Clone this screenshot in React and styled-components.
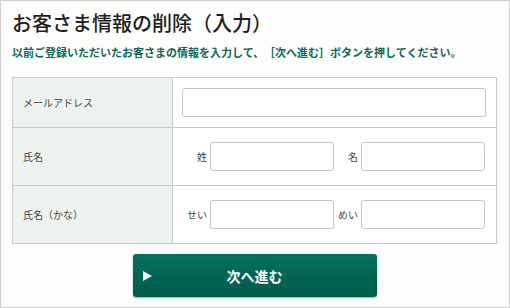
import React from 'react'
import styled, {createGlobalStyle} from 'styled-components'

const GlobalStyle = createGlobalStyle`
  html, body {margin: 0; padding: 0; background: #fdfdfb;}
  body {font-family: "Noto Sans CJK JP", "Noto Sans", sans-serif; text-spacing-trim: space-all;}
`

const Page = styled.div`
  box-sizing: border-box;
  width: 510px;
  height: 308px;
  border: 1px solid #cfcfcf;
  background: #fdfdfb;
  padding: 12px 12px 0 11px;
  display: flex;
  flex-direction: column;
`

const Title = styled.h1`
  margin: 0;
  font-size: 20px;
  line-height: 20px;
  font-weight: 500;
  color: #1e1e1e;
`

const Lead = styled.p`
  margin: 12px 0 0;
  font-size: 11px;
  line-height: 14px;
  font-weight: 700;
  color: #0b6a56;
  white-space: nowrap;
`

const Table = styled.div`
  margin-top: 18px;
  border: 1px solid #c9c9c9;
  display: grid;
  grid-template-columns: 160px 1fr;
`

const Row = styled.div`
  display: contents;
  > * {
    height: ${p => p.$h}px;
    border-top: ${p => p.$first ? 'none' : '1px solid #c9c9c9'};
  }
`

const Label = styled.div`
  box-sizing: border-box;
  background: #eef2ee;
  border-right: 1px solid #c9c9c9;
  padding-left: 10px;
  display: flex;
  align-items: center;
  font-size: 10px;
  color: #444;
`

const Cell = styled.div`
  box-sizing: border-box;
  background: #fff;
  display: flex;
  align-items: center;
  padding: 0 10px 0 9px;
`

const Pair = styled.div`
  display: grid;
  grid-template-columns: 37px 124px 27px 124px;
  align-items: center;
  margin-left: -9px;
`

const Sub = styled.span`
  font-size: 10px;
  color: #444;
  text-align: right;
  padding-right: 3px;
`

const Input = styled.input`
  box-sizing: border-box;
  width: 100%;
  height: 29px;
  border: 1px solid #c4c4c4;
  border-radius: 3px;
  background: #fff;
  outline: none;
`

const Button = styled.button`
  align-self: center;
  position: relative;
  margin-top: 10px;
  width: 244px;
  height: 43px;
  border: none;
  border-radius: 3px;
  background: linear-gradient(#00735f, #005a49);
  box-shadow: 0 1px 2px rgba(0, 0, 0, 0.35);
  color: #fff;
  font-family: inherit;
  font-size: 14px;
  font-weight: 700;
  display: flex;
  align-items: center;
  justify-content: center;
  cursor: pointer;

  &::before {
    content: '';
    position: absolute;
    left: 10px;
    top: 50%;
    margin-top: -5px;
    border-style: solid;
    border-width: 5px 0 5px 9px;
    border-color: transparent transparent transparent #fff;
  }
`

export default function App () {
  return (
    <>
      <GlobalStyle />
      <Page>
        <Title>お客さま情報の削除（入力）</Title>
        <Lead>以前ご登録いただいたお客さまの情報を入力して、［次へ進む］ボタンを押してください。</Lead>
        <Table>
          <Row $h={49} $first>
            <Label>メールアドレス</Label>
            <Cell><Input /></Cell>
          </Row>
          <Row $h={58}>
            <Label>氏名</Label>
            <Cell>
              <Pair>
                <Sub>姓</Sub><Input />
                <Sub>名</Sub><Input />
              </Pair>
            </Cell>
          </Row>
          <Row $h={58}>
            <Label>氏名（かな）</Label>
            <Cell>
              <Pair>
                <Sub>せい</Sub><Input />
                <Sub>めい</Sub><Input />
              </Pair>
            </Cell>
          </Row>
        </Table>
        <Button>次へ進む</Button>
      </Page>
    </>
  )
}
